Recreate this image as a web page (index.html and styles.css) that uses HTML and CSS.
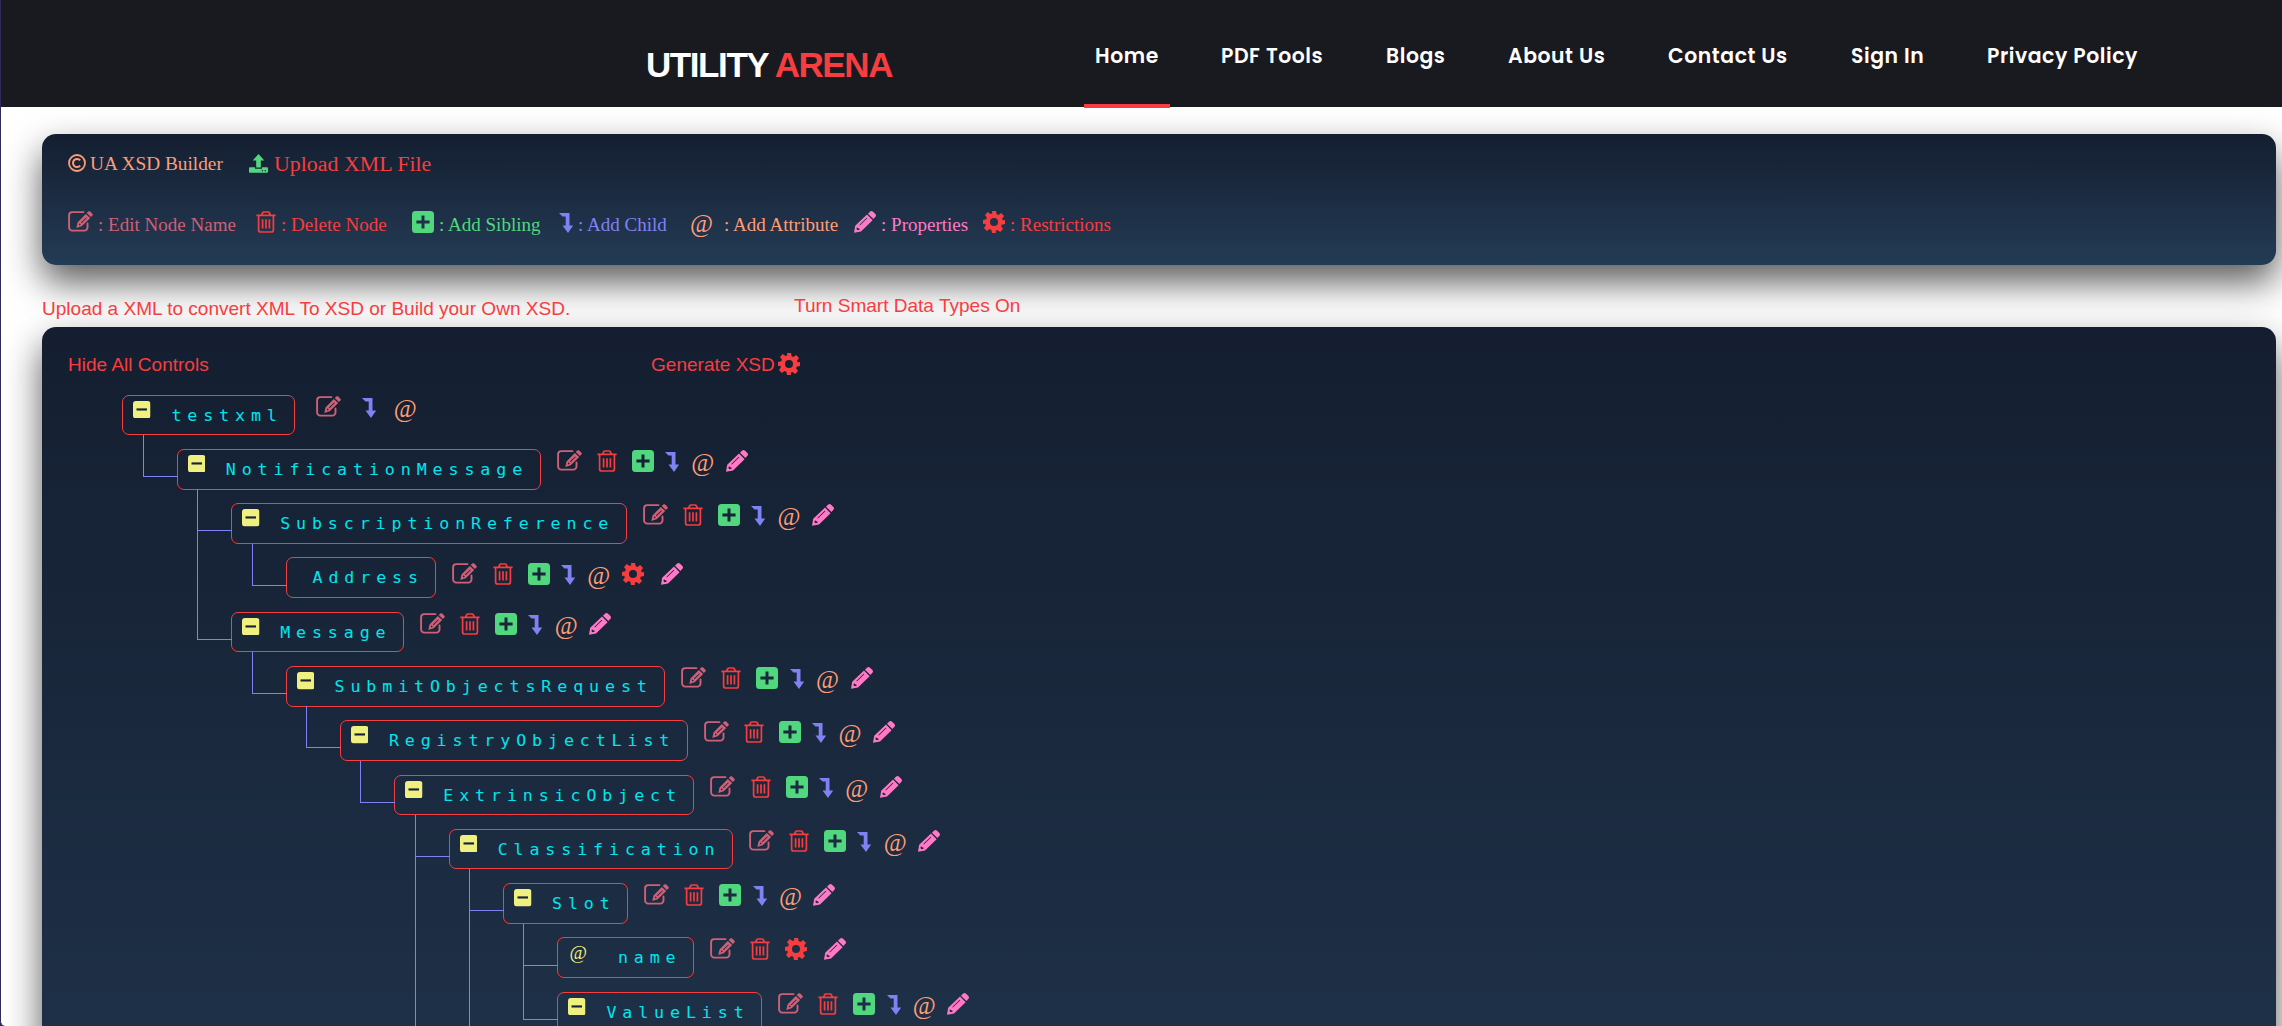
FILE: index.html
```html
<!DOCTYPE html>
<html lang="en">
<head>
    <meta charset="UTF-8">
    <meta name="viewport" content="width=device-width, initial-scale=1.0">
    <title>Utility Arena - XSD Builder</title>
    <link rel="stylesheet" href="styles.css">
</head>
<body>

    <!-- Icons -->
    <svg width="0" height="0" class="sprite">
        <symbol id="edit" viewBox="0 0 25 21">
            <path d="M15.5 1.1H4.2A3.1 3.1 0 0 0 1.1 4.2v12.3a3.1 3.1 0 0 0 3.1 3.1h12.2a3.1 3.1 0 0 0 3.1-3.1v-4" fill="none" stroke="currentColor" stroke-width="1.9" stroke-linecap="round"/>
            <path fill="currentColor" fill-rule="evenodd" d="M17.8 2.9l4.4 4.1-8.5 8.2-5.4 1.7 1.2-5.5zM11.3 12.2l-.5 2.2 2.1-.7zM12.9 11.6l.6.6 5.3-5.2-.6-.6zM18.7 2.1l1.6-1.5c.6-.6 1.3-.6 1.9 0l2.2 2.1c.6.6.6 1.3 0 1.9l-1.5 1.5z"/>
        </symbol>
        <symbol id="trash" viewBox="0 0 20 22">
            <path d="M.4 4.4h19.2M5.6 4.2l1-2.3q.4-.9 1.3-.9h4.2q.9 0 1.3.9l1 2.3M2.6 4.5v14.5q0 2 2 2h10.8q2 0 2-2V4.5M6.6 8.3v9.2M10 8.3v9.2M13.4 8.3v9.2" fill="none" stroke="currentColor" stroke-width="1.7"/>
        </symbol>
        <symbol id="plus" viewBox="0 0 22 22">
            <path fill="currentColor" fill-rule="evenodd" d="M3.5 0h15A3.5 3.5 0 0 1 22 3.5v15a3.5 3.5 0 0 1-3.5 3.5h-15A3.5 3.5 0 0 1 0 18.5v-15A3.5 3.5 0 0 1 3.5 0zM9.5 4.4v5.1H4.4v3h5.1v5.1h3v-5.1h5.1v-3h-5.1V4.4z"/>
        </symbol>
        <symbol id="child" viewBox="0 0 14 20">
            <path fill="currentColor" d="M0 0h10.5v12.5H14.2L9 20 3.5 12.5H6.7V3.6H3.5z"/>
        </symbol>
        <symbol id="pencil" viewBox="0 0 22 22">
            <path fill="currentColor" fill-rule="evenodd" d="M13 3.6l5.6 5.6L7 20.6 0 21.8 1.2 14.8zM12.7 6.7L5.3 13.9l.6.6 7.4-7.2zM3 16.2l-.6 1.9 1.2 1.1 2-.5-.2-1.2-1.2-.2zM14 2.7l2.2-2.1c.9-.8 1.8-.8 2.6 0l2.6 2.5c.8.9.8 1.8 0 2.6l-2 2.3z"/>
        </symbol>
        <symbol id="gear" viewBox="-11 -11 22 22">
            <path fill="currentColor" fill-rule="evenodd" d="M-2-11h4l.7 3.3 1.7.7 2.8-1.9 2.8 2.8-1.9 2.8.7 1.6L11-2v4l-3.2.7-.7 1.6 1.9 2.8-2.8 2.8-2.8-1.9-1.7.7L2 11h-4l-.7-3.3-1.7-.7-2.8 1.9-2.8-2.8 1.9-2.8-.7-1.6L-11 2v-4l3.2-.7.7-1.6L-9-7.1l2.8-2.8 2.8 1.9 1.7-.7zM0-4a4 4 0 1 0 0 8 4 4 0 0 0 0-8z"/>
        </symbol>
        <symbol id="minus" viewBox="0 0 18 18">
            <rect width="18" height="18" rx="3" fill="currentColor"/>
            <rect class="bar" x="3.6" y="7.6" width="10.8" height="2.2"/>
        </symbol>
        <symbol id="copyright" viewBox="0 0 18 18">
            <circle cx="9" cy="9" r="8" fill="none" stroke="currentColor" stroke-width="1.8"/>
            <path d="M12.2 6.3A4.1 4.1 0 1 0 12.2 11.7" fill="none" stroke="currentColor" stroke-width="2"/>
        </symbol>
        <symbol id="upload" viewBox="0 0 19 19">
            <path fill="currentColor" fill-rule="evenodd" d="M9.5 0l5.8 6.4h-3.5v7H7.2v-7H3.7zM1 13.2h5v1.5h7v-1.5h5q1 0 1 1v3.6q0 1-1 1H1q-1 0-1-1v-3.6q0-1 1-1zM12.8 16.1v1.2H14v-1.2zM15.7 16.1v1.2h1.2v-1.2z"/>
        </symbol>
    </svg>

    <header class="header">
        <h1 class="logo">UTILITY <span>ARENA</span></h1>
        <nav class="menu">
            <a class="active w-home">Home</a>
            <a class="w-pdf">PDF Tools</a>
            <a class="w-blogs">Blogs</a>
            <a class="w-about">About Us</a>
            <a class="w-contact">Contact Us</a>
            <a class="w-sign">Sign In</a>
            <a class="w-privacy">Privacy Policy</a>
        </nav>
    </header>

    <main>
        <!-- Toolbar with the icon legend -->
        <section class="panel toolbar">
            <div class="bar-top">
                <span class="brand"><svg class="i-copy"><use href="#copyright"/></svg>UA XSD Builder</span>
                <span class="upload"><svg class="i-upload"><use href="#upload"/></svg>Upload XML File</span>
            </div>
            <div class="legend">
                <span class="edit l-edit"><svg><use href="#edit"/></svg><b>: Edit Node Name</b></span>
                <span class="trash l-trash"><svg><use href="#trash"/></svg><b>: Delete Node</b></span>
                <span class="plus l-plus"><svg><use href="#plus"/></svg><b>: Add Sibling</b></span>
                <span class="child l-child"><svg><use href="#child"/></svg><b>: Add Child</b></span>
                <span class="at l-at"><i>@</i><b>: Add Attribute</b></span>
                <span class="pencil l-pencil"><svg><use href="#pencil"/></svg><b>: Properties</b></span>
                <span class="gear l-gear"><svg><use href="#gear"/></svg><b>: Restrictions</b></span>
            </div>
        </section>

        <div class="hints">
            <span class="hint-upload">Upload a XML to convert XML To XSD or Build your Own XSD.</span>
            <span class="hint-types">Turn Smart Data Types On</span>
        </div>

        <section class="panel builder">
            <div class="actions">
                <span class="hide-controls">Hide All Controls</span>
                <span class="generate">Generate XSD<svg><use href="#gear"/></svg></span>
            </div>

            <ul class="tree root">
                <li>
                    <div class="row">
                        <span class="node"><svg><use href="#minus"/></svg>testxml</span>
                        <span class="tools first"><svg class="edit"><use href="#edit"/></svg><svg class="child"><use href="#child"/></svg><i class="at">@</i></span>
                    </div>
                    <ul class="tree">
                        <li>
                            <div class="row">
                                <span class="node"><svg><use href="#minus"/></svg>NotificationMessage</span>
                                <span class="tools"><svg class="edit"><use href="#edit"/></svg><svg class="trash"><use href="#trash"/></svg><svg class="plus"><use href="#plus"/></svg><svg class="child"><use href="#child"/></svg><i class="at">@</i><svg class="pencil"><use href="#pencil"/></svg></span>
                            </div>
                            <ul class="tree">
                                <li>
                                    <div class="row">
                                        <span class="node"><svg><use href="#minus"/></svg>SubscriptionReference</span>
                                        <span class="tools"><svg class="edit"><use href="#edit"/></svg><svg class="trash"><use href="#trash"/></svg><svg class="plus"><use href="#plus"/></svg><svg class="child"><use href="#child"/></svg><i class="at">@</i><svg class="pencil"><use href="#pencil"/></svg></span>
                                    </div>
                                    <ul class="tree">
                                        <li>
                                            <div class="row">
                                                <span class="node leaf">Address</span>
                                                <span class="tools low"><svg class="edit"><use href="#edit"/></svg><svg class="trash"><use href="#trash"/></svg><svg class="plus"><use href="#plus"/></svg><svg class="child"><use href="#child"/></svg><i class="at">@</i><svg class="gear"><use href="#gear"/></svg><svg class="pencil"><use href="#pencil"/></svg></span>
                                            </div>
                                        </li>
                                    </ul>
                                </li>
                                <li>
                                    <div class="row">
                                        <span class="node"><svg><use href="#minus"/></svg>Message</span>
                                        <span class="tools"><svg class="edit"><use href="#edit"/></svg><svg class="trash"><use href="#trash"/></svg><svg class="plus"><use href="#plus"/></svg><svg class="child"><use href="#child"/></svg><i class="at">@</i><svg class="pencil"><use href="#pencil"/></svg></span>
                                    </div>
                                    <ul class="tree">
                                        <li>
                                            <div class="row">
                                                <span class="node"><svg><use href="#minus"/></svg>SubmitObjectsRequest</span>
                                                <span class="tools"><svg class="edit"><use href="#edit"/></svg><svg class="trash"><use href="#trash"/></svg><svg class="plus"><use href="#plus"/></svg><svg class="child"><use href="#child"/></svg><i class="at">@</i><svg class="pencil"><use href="#pencil"/></svg></span>
                                            </div>
                                            <ul class="tree">
                                                <li>
                                                    <div class="row">
                                                        <span class="node"><svg><use href="#minus"/></svg>RegistryObjectList</span>
                                                        <span class="tools"><svg class="edit"><use href="#edit"/></svg><svg class="trash"><use href="#trash"/></svg><svg class="plus"><use href="#plus"/></svg><svg class="child"><use href="#child"/></svg><i class="at">@</i><svg class="pencil"><use href="#pencil"/></svg></span>
                                                    </div>
                                                    <ul class="tree">
                                                        <li>
                                                            <div class="row">
                                                                <span class="node"><svg><use href="#minus"/></svg>ExtrinsicObject</span>
                                                                <span class="tools"><svg class="edit"><use href="#edit"/></svg><svg class="trash"><use href="#trash"/></svg><svg class="plus"><use href="#plus"/></svg><svg class="child"><use href="#child"/></svg><i class="at">@</i><svg class="pencil"><use href="#pencil"/></svg></span>
                                                            </div>
                                                            <ul class="tree">
                                                                <li class="more">
                                                                    <div class="row">
                                                                        <span class="node"><svg><use href="#minus"/></svg>Classification</span>
                                                                        <span class="tools"><svg class="edit"><use href="#edit"/></svg><svg class="trash"><use href="#trash"/></svg><svg class="plus"><use href="#plus"/></svg><svg class="child"><use href="#child"/></svg><i class="at">@</i><svg class="pencil"><use href="#pencil"/></svg></span>
                                                                    </div>
                                                                    <ul class="tree">
                                                                        <li class="more">
                                                                            <div class="row">
                                                                                <span class="node"><svg><use href="#minus"/></svg>Slot</span>
                                                                                <span class="tools"><svg class="edit"><use href="#edit"/></svg><svg class="trash"><use href="#trash"/></svg><svg class="plus"><use href="#plus"/></svg><svg class="child"><use href="#child"/></svg><i class="at">@</i><svg class="pencil"><use href="#pencil"/></svg></span>
                                                                            </div>
                                                                            <ul class="tree">
                                                                                <li>
                                                                                    <div class="row">
                                                                                        <span class="node attr"><i>@</i>name</span>
                                                                                        <span class="tools attr-tools"><svg class="edit"><use href="#edit"/></svg><svg class="trash"><use href="#trash"/></svg><svg class="gear"><use href="#gear"/></svg><svg class="pencil"><use href="#pencil"/></svg></span>
                                                                                    </div>
                                                                                </li>
                                                                                <li>
                                                                                    <div class="row">
                                                                                        <span class="node"><svg><use href="#minus"/></svg>ValueList</span>
                                                                                        <span class="tools"><svg class="edit"><use href="#edit"/></svg><svg class="trash"><use href="#trash"/></svg><svg class="plus"><use href="#plus"/></svg><svg class="child"><use href="#child"/></svg><i class="at">@</i><svg class="pencil"><use href="#pencil"/></svg></span>
                                                                                    </div>
                                                                                </li>
                                                                            </ul>
                                                                        </li>
                                                                    </ul>
                                                                </li>
                                                            </ul>
                                                        </li>
                                                    </ul>
                                                </li>
                                            </ul>
                                        </li>
                                    </ul>
                                </li>
                            </ul>
                        </li>
                    </ul>
                </li>
            </ul>
        </section>
    </main>

</body>
</html>
```

FILE: styles.css
```css
* {
    box-sizing: border-box;
}
html {
    height: 100%;
    overflow: hidden;
    background-color: #2d2b5c;
}
body {
    margin: 0;
    height: 100vh;
    overflow: hidden;
    background-color: #fff;
    border-left: 1px solid #2d2b5c;
    border-bottom-left-radius: 5px;
    font-family: "Liberation Sans", Arial, sans-serif;
    font-size: 19.04px;
    color: #f73d3f;
}
i, b {
    font-style: normal;
    font-weight: normal;
}
.sprite {
    position: absolute;
}
svg {
    display: block;
    flex: none;
}

/* Header */
.header {
    position: relative;
    z-index: 1;
    display: flex;
    height: 107px;
    padding-left: 645px;
    background-color: #191920;
}
.logo {
    width: 438px;
    margin: 0;
    padding-top: 45px;
    font-size: 35px;
    line-height: 40px;
    letter-spacing: -1.42px;
    color: #fff;
    white-space: nowrap;
}
.logo span {
    color: #f73d3f;
}
.menu {
    display: flex;
    gap: 40px;
    height: 108px;
}
.menu a {
    padding: 41px 0 0 11px;
    font-family: Poppins, Inter, sans-serif;
    font-size: 20.4px;
    font-weight: 600;
    line-height: 31px;
    letter-spacing: .55px;
    color: #fff;
    white-space: nowrap;
}
.menu .active {
    border-bottom: 4px solid #f73d3f;
}
.w-home { width: 86px; }
.w-pdf { width: 125px; }
.w-blogs { width: 82px; }
.w-about { width: 120px; }
.w-contact { width: 143px; }
.w-sign { width: 96px; }
.w-privacy { width: 173px; }

/* Panels */
main {
    height: calc(100vh - 107px);
    overflow: hidden;
    padding: 27px 6px 0 41px;
}
.panel {
    border-radius: 14px;
    background: linear-gradient(#141e30, #243b55);
    box-shadow: 0 17px 36px rgba(0, 0, 0, .65);
}
.toolbar {
    height: 131px;
    padding: 17px 26px 0;
    font-family: "Liberation Serif", "Times New Roman", serif;
}
.bar-top {
    display: flex;
    height: 60px;
}
.brand, .upload {
    display: flex;
    height: 26px;
    line-height: 26px;
    white-space: nowrap;
}
.brand {
    width: 181px;
    font-size: 19.3px;
    color: #ff9d75;
}
.upload {
    font-size: 21.9px;
}
.i-copy {
    width: 18px;
    height: 18px;
    margin: 3px 4px 0 0;
}
.i-upload {
    width: 19px;
    height: 19px;
    margin: 3px 6px 0 0;
    color: #51d87f;
}
.legend {
    display: flex;
}
.legend span {
    display: flex;
    white-space: nowrap;
}
.legend b {
    line-height: 22px;
    padding-top: 3px;
}
.legend svg + b {
    margin-left: 5px;
}
.l-edit { width: 188px; }
.l-trash { width: 156px; }
.l-plus { width: 147px; }
.l-child { width: 131px; }
.l-at { width: 164px; }
.l-pencil { width: 129px; }
.legend .l-at b {
    margin-left: 10px;
}

/* Icon sizes and colours, shared by the legend and the tree */
.edit { color: #cf6075; }
.trash { color: #f73d3f; }
.plus { color: #51d87f; }
.child { color: #7f82f2; }
.at { color: #ff9d75; }
.pencil { color: #ff7ac6; }
.gear { color: #f73d3f; }
svg.edit, .l-edit svg {
    width: 25px;
    height: 21px;
}
svg.trash, .l-trash svg {
    width: 20px;
    height: 22px;
}
svg.plus, .l-plus svg,
svg.gear, .l-gear svg,
svg.pencil, .l-pencil svg,
.generate svg {
    width: 22px;
    height: 22px;
}
svg.child, .l-child svg {
    width: 14px;
    height: 20px;
    margin-top: 2px;
}
i.at, .l-at i {
    width: 24px;
    height: 22px;
    font-family: "Liberation Serif", "Times New Roman", serif;
    font-size: 25px;
    line-height: 25px;
}

/* Hints */
.hints {
    display: flex;
    height: 62px;
    line-height: 22px;
}
.hint-upload {
    width: 752px;
    padding-top: 33px;
}
.hint-types {
    padding-top: 30px;
}

/* Tree */
.builder {
    height: 1130px;
    padding: 27px 26px 0;
}
.actions {
    display: flex;
    height: 40.7px;
    line-height: 22px;
}
.hide-controls {
    width: 583px;
}
.generate {
    display: flex;
    gap: 3px;
}
.generate svg {
    margin-top: -1px;
}
.tree {
    margin: 0;
    padding: 0 0 0 54.38px;
    list-style: none;
}
.tree li {
    position: relative;
}
.tree .tree li::before {
    content: "";
    position: absolute;
    left: -34px;
    top: -13.8px;
    width: 34px;
    height: 41px;
    border-left: 1px solid #7f82f2;
    border-bottom: 1px solid #7f82f2;
}
.tree .tree li:not(:last-child)::after,
.tree .tree .more::after {
    content: "";
    position: absolute;
    left: -34px;
    top: 0;
    bottom: 0;
    border-left: 1px solid #7f82f2;
}
.row {
    display: flex;
    height: 54.27px;
}
.node {
    display: flex;
    height: 40.6px;
    padding: 0 11.5px 0 10px;
    border: 1px solid #f73d3f;
    border-radius: 7px;
    font-family: Consolas, "DejaVu Sans Mono", monospace;
    font-size: 16.6px;
    line-height: 39px;
    letter-spacing: 5.92px;
    color: #00e5ee;
}
.node svg {
    width: 17.5px;
    height: 17.5px;
    margin: 5px 20.5px 0 0;
    color: #f0f080;
}
.bar {
    fill: #17223a;
}
.leaf {
    padding-left: 26px;
}
.attr i {
    width: 48.5px;
    margin-left: 1px;
    font-family: "Liberation Serif", "Times New Roman", serif;
    font-size: 19px;
    line-height: 29px;
    color: #f0f080;
}
.tools {
    display: flex;
    margin: 1px 0 0 16px;
}
.tools .trash { margin-left: 15.2px; }
.tools .plus { margin-left: 15px; }
.tools .child { margin-left: 11.3px; }
.tools .at { margin-left: 12.3px; }
.tools .gear { margin-left: 10.5px; }
.tools .pencil { margin-left: 10.5px; }
.tools .gear + .pencil { margin-left: 17px; }
.attr-tools .gear { margin-left: 15px; }
.first { margin-left: 20.5px; }
.first .child { margin-left: 21px; }
.first .at { margin-left: 18px; }
.low { margin-top: 6px; }
```
